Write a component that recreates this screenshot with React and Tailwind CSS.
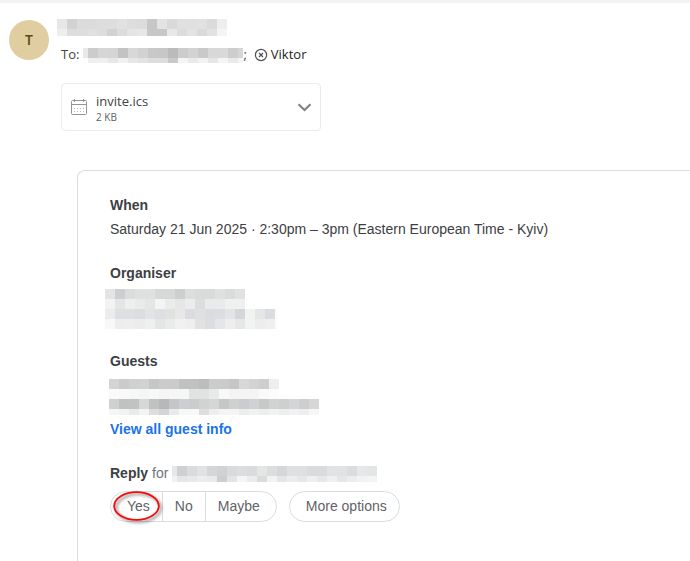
import React from 'react';

// grey blocks that cover names and addresses: [height, shades] per row
const SENDER = [
  [10, 'e7 d2 db db dd dd e1 dd dc c7 e3 d9 e0 e0 e1 da ee'],
  [7, 'ee dd de e0 dd d2 dc e4 e7 c7 c7 e8 dc e3 da e2 f4'],
];
const RECIPIENT = [
  [10, 'e9 cc d6 d5 c3 d8 d2 c8 c7 bb cc d3 c9 d8 d9 cd d6'],
  [5, 'fd ef ef e7 f1 e7 e3 dd dd c9 f4 ea f2 e6 f5 ea f4'],
];
const ORGANISER = [
  [10, 'e3e5e4 cdcecf dbdcde dfe1e0 dfe1e0 d7d9d8 d7d8d9 cdcecf dcdddd d9dbdb d9dbdb dfe1e0 dadcdc e1e1e1'],
  [10, 'f3f3f3 e4e6e6 eeeeee e9ebea e3e6e5 f4f4f4 eaecec e6e6e7 ececed dbdedc e9eaea e9eaea eff1f0 f0f0f0'],
  [10, 'eaedec dedfe2 dedfe2 dcdde1 e1e3e5 dedfe2 e0e2e1 e9e8e9 dbdce0 dfe0e2 dbdce0 dcdde0 e2e4e7 d5d6d9 f1f3f3 e5e7e6 dbdce0 fbfdfd'],
  [10, 'f6f9f8 ededed eeeeee ebedec eef0ef e4e5e9 e9ebea f1f1f1 efeff0 e1e3e2 dcdddf e5e6e9 eeeeef e6e7ea f2f4f4 ededed efeff0 fbfdfd'],
];
const GUESTS = [
  [10, 'd3d4d4 cacbcc cfd0d0 d1d2d2 c5c6c8 cacbcb cacbcb c0c1c2 c0c1c3 bbbcbe cbcccd cacbcb c5c6c7 d7d8d8 d3d3d4 cdcecf eeeeee'],
  [10, 'fafafa f9f9f9 f7f7f7 f4f6f5 f8f8f8 f5f5f5 f6f6f6 f6f6f6 e1e3e2 e1e3e2 e8e9e9 f8f8f8 f4f4f4 f4f4f4 f4f4f4 fafafa fcfcfc'],
  [10, 'cfd0d0 c0c2c2 c1c2c4 d6d8d7 c0c1c3 b7b8ba c5c6c8 cdcecf cbccce d1d3d2 d5d6d7 c5c7c6 cfd0d1 cbcccd d0d1d3 c7c8c9 d1d3d2 cecfcf d4d5d7 cdcecf d6d6d7'],
  [6, 'f5f5f5 f1f3f2 e9ebea f3f3f3 dddddd d3d4d6 e9ebea f7f7f7 f8f8f8 dedede eeeeef f4f4f4 f4f4f4 eceeed f1f1f2 eeeeef f1f3f2 eeeeee f1f1f1 eeeeee f6f6f6'],
];
const REPLIER = [
  [10, 'e6e8e8 cfd0d2 dadbdd e1e2e4 d5d6d8 d1d2d5 d9dadc dcdddf dadbdd e4e6e6 dcdddf d5d6d8 dfe0e1 dfe0e1 dadbdd dadbdd e2e3e5 e1e2e4 dbdcde e6e7e8 e4e5e6'],
  [6, 'f0f2f1 e5e7e6 e8eae9 ecedee e9eaeb cdcecf e3e4e5 f4f6f5 ebeced dadbdc f1f3f2 e4e6e7 eceeed e6e7e9 eff1f1 e7e9e8 eeefef e5e6e6 ecedee f1f3f2 f3f4f4'],
];

// firstCell is the width of the leftmost column, the others are 10px
function Mosaic({ rows, width, firstCell = 10 }) {
  const height = rows.reduce((sum, [h]) => sum + h, 0);
  let y = 0;
  return (
    <svg width={width} height={height} shapeRendering="crispEdges" aria-hidden="true" className="shrink-0">
      {rows.map(([h, shades], r) => {
        const top = y;
        y += h;
        return shades.split(' ').map((s, i) => (
          <rect
            key={`${r}-${i}`}
            x={i === 0 ? 0 : firstCell + (i - 1) * 10}
            y={top}
            width={i === 0 ? firstCell : 10}
            height={h}
            fill={`#${s.length === 2 ? s + s + s : s}`}
          />
        ));
      })}
    </svg>
  );
}

function CalendarIcon() {
  return (
    <svg width="18" height="18" viewBox="0 0 18 18" fill="none" stroke="#949494" aria-hidden="true">
      <rect x="1.5" y="2.5" width="15" height="14" rx="1" />
      <path d="M1.5 6.5h15M4.5 1v3M13.5 1v3" />
      <path d="M4 10.5h11M4 13.5h11" stroke="#b4b4b4" strokeDasharray="1 2" />
    </svg>
  );
}

function RemoveIcon() {
  return (
    <svg width="14" height="14" viewBox="0 0 14 14" fill="none" stroke="#505050" aria-hidden="true">
      <circle cx="7" cy="7" r="5.6" strokeWidth="1.2" />
      <path d="M5 5l4 4M9 5l-4 4" strokeWidth="1.2" />
    </svg>
  );
}

function ChevronIcon() {
  return (
    <svg width="16" height="16" viewBox="0 0 16 16" fill="none" stroke="#808080" strokeWidth="2" aria-hidden="true">
      <path d="M2.5 5.2L8.5 11l6-5.8" />
    </svg>
  );
}

function MessageHeader() {
  return (
    <header className="flex gap-2 pl-[9px] pt-[13px]">
      <div className="mt-1 flex size-10 shrink-0 items-center justify-center rounded-full bg-[#e0cda0] text-sm font-semibold text-[#5c4813]">
        T
      </div>
      <div className="pt-[3px]">
        <Mosaic rows={SENDER} width={170} />
        <div className="mt-[9px] flex h-5 items-center pl-1 text-[13px] text-[#424242]">
          <span className="mr-1">To:</span>
          <Mosaic rows={RECIPIENT} width={160} firstCell={5} />
          <span>;</span>
          <button type="button" aria-label="Remove Viktor" className="ml-[7px] mr-[3px]">
            <RemoveIcon />
          </button>
          <span className="text-[#242424]">Viktor</span>
        </div>
      </div>
    </header>
  );
}

function Attachment() {
  return (
    <div className="ml-[61px] mt-[18px] flex h-12 w-[260px] items-center rounded border border-[#ebebeb] px-2">
      <CalendarIcon />
      <div className="ml-2 flex-1 pt-[2px]">
        <div className="text-[13px] leading-[18px] text-[#424242]">invite.ics</div>
        <div className="text-[10px] leading-[14px] text-[#616161]">2 KB</div>
      </div>
      <button type="button" aria-label="More actions">
        <ChevronIcon />
      </button>
    </div>
  );
}

function ReplyButtons() {
  return (
    <div className="mt-2 flex gap-3 text-[#5f6368]">
      <div className="flex h-[31px] rounded-full border border-[#dadce0]">
        <button type="button" className="relative pb-px pl-4 pr-3">
          Yes
          <svg width="54" height="38" viewBox="0 0 54 38" fill="none" aria-hidden="true" className="absolute -top-1 left-0">
            <defs>
              <filter id="ringShadow" x="-20%" y="-20%" width="150%" height="160%">
                <feDropShadow dx="2" dy="2" stdDeviation="1.5" floodColor="#000" floodOpacity="0.5" />
              </filter>
            </defs>
            <ellipse cx="25.5" cy="18" rx="22.3" ry="13.8" stroke="#f00808" strokeWidth="1.8" filter="url(#ringShadow)" />
          </svg>
        </button>
        <button type="button" className="border-x border-[#dadce0] px-3 pb-px">No</button>
        <button type="button" className="pb-px pl-3 pr-4">Maybe</button>
      </div>
      <button type="button" className="h-[31px] rounded-full border border-[#dadce0] pb-px pl-4 pr-3">More options</button>
    </div>
  );
}

function InviteCard() {
  return (
    <section className="ml-[77px] mt-[39px] flex-1 rounded-tl-lg border-l border-t border-[#dadce0] px-8 pb-8 pt-6 font-['Liberation_Sans',Arial,sans-serif] text-sm leading-5 text-[#3c4043]">
      <h2 className="font-bold">When</h2>
      <p className="mt-1">Saturday 21 Jun 2025 · 2:30pm – 3pm (Eastern European Time - Kyiv)</p>

      <h2 className="mt-6 font-bold">Organiser</h2>
      <div className="-ml-[5px] mt-[6px]">
        <Mosaic rows={ORGANISER} width={173} />
      </div>

      <h2 className="mt-[22px] font-bold">Guests</h2>
      <div className="-ml-px mt-2">
        <Mosaic rows={GUESTS} width={210} />
      </div>
      <a href="#guests" className="mt-1 inline-block font-bold text-[#1a73e8]">View all guest info</a>

      <div className="mt-6 flex items-end gap-1">
        <p className="text-[#70757a]"><b className="text-[#3c4043]">Reply</b> for</p>
        <div className="pb-px">
          <Mosaic rows={REPLIER} width={205} firstCell={5} />
        </div>
      </div>
      <ReplyButtons />
    </section>
  );
}

export default function App() {
  return (
    <main className="flex min-h-screen flex-col overflow-x-hidden border-t-[3px] border-[#f3f3f3] bg-white font-['Open_Sans','Noto_Sans',sans-serif]">
      <MessageHeader />
      <Attachment />
      <InviteCard />
    </main>
  );
}
